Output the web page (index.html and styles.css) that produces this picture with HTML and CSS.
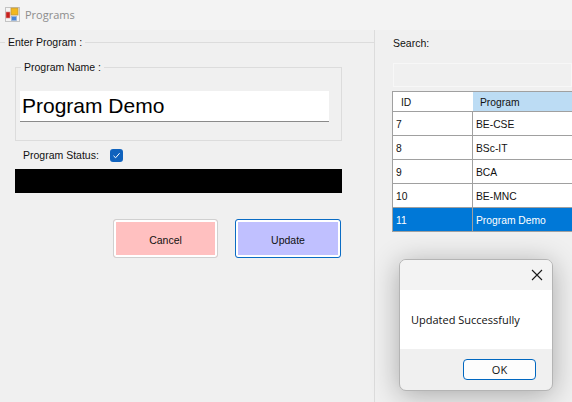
FILE: index.html
```html
<!DOCTYPE html>
<html lang="en">
<head>
  <meta charset="UTF-8" />
  <title>Programs</title>
  <link rel="stylesheet" href="styles.css">
</head>
<body>
  <div class="window">

    <!-- Title bar -->
    <div class="titlebar">
      <svg class="app-icon" width="16" height="16" viewBox="0 0 16 16">
        <rect x="1.5" y="0.5" width="14" height="14" fill="#f4f4f4" stroke="#c4c4c4"/>
        <rect x="2" y="5" width="4" height="6" fill="#c8201c" stroke="#d89090" stroke-width="0.6"/>
        <rect x="7" y="1" width="7" height="7" fill="#f2b81e" stroke="#c09a40" stroke-width="0.8"/>
        <rect x="7.5" y="9.5" width="5" height="4" fill="#4a86d8" stroke="#9ab4d8" stroke-width="0.8"/>
      </svg>
      <span class="title">Programs</span>
    </div>

    <div class="main">
      <!-- Left side: edit form -->
      <div class="left">
        <fieldset class="enter-group">
          <legend>Enter Program :</legend>
          <fieldset class="name-group">
            <legend>Program Name :</legend>
            <div class="name-input">Program Demo</div>
          </fieldset>
          <div class="status-row">
            <span>Program Status:</span>
            <span class="checkbox">
              <svg width="9" height="9" viewBox="0 0 9 9"><path d="M1.5 4.8 L3.6 6.8 L7.6 2.2" fill="none" stroke="#fff" stroke-width="1"/></svg>
            </span>
          </div>
          <div class="black-bar"></div>
          <div class="buttons">
            <div class="btn btn-cancel">Cancel</div>
            <div class="btn btn-update">Update</div>
          </div>
        </fieldset>
      </div>

      <!-- Right side: search and grid -->
      <div class="right">
        <div class="search-label">Search:</div>
        <div class="search-box"></div>
        <div class="grid">
          <div class="row head">
            <div class="cell id">ID</div>
            <div class="cell prog">Program</div>
          </div>
          <div class="row">
            <div class="cell id">7</div>
            <div class="cell prog">BE-CSE</div>
          </div>
          <div class="row">
            <div class="cell id">8</div>
            <div class="cell prog">BSc-IT</div>
          </div>
          <div class="row">
            <div class="cell id">9</div>
            <div class="cell prog">BCA</div>
          </div>
          <div class="row">
            <div class="cell id">10</div>
            <div class="cell prog">BE-MNC</div>
          </div>
          <div class="row selected">
            <div class="cell id">11</div>
            <div class="cell prog">Program Demo</div>
          </div>
        </div>
      </div>
    </div>

    <!-- Message box -->
    <div class="dialog">
      <div class="dialog-top">
        <svg width="12" height="12" viewBox="0 0 12 12"><path d="M1 1 L11 11 M11 1 L1 11" stroke="#1a1a1a" stroke-width="1.1" fill="none"/></svg>
      </div>
      <div class="dialog-body">Updated Successfully</div>
      <div class="dialog-foot">
        <div class="ok-btn">OK</div>
      </div>
    </div>

  </div>
</body>
</html>
```

FILE: styles.css
```css
html, body {
  margin: 0;
  padding: 0;
  background: #f0f0f0;
  color: #111;
  font-family: 'Liberation Sans', Arial, sans-serif;
  font-size: 10.5px;
}

.window {
  position: relative;
  width: 572px;
  height: 402px;
  overflow: hidden;
  display: flex;
  flex-direction: column;
}

.titlebar {
  height: 30px;
  flex: none;
  display: flex;
  align-items: center;
  gap: 5px;
  padding-left: 4px;
  background: #f3f3f3;
}

.title {
  color: #8c8c8c;
  font-family: 'Open Sans', sans-serif;
  font-size: 11px;
  padding-bottom: 2px;
}

.main {
  flex: 1;
  display: flex;
}

.left {
  width: 375px;
  flex: none;
  box-sizing: border-box;
  border-right: 1px solid #dcdcdc;
}

fieldset {
  margin: 0;
  min-width: 0;
  border: 1px solid #dcdcdc;
}

legend {
  padding: 0 3px;
  line-height: 14px;
}

.enter-group {
  border-width: 1px 0 0 0;
  padding: 0 0 0 15px;
  margin-top: 5px;
}

.enter-group > legend {
  margin-left: -10px;
}

.name-group {
  width: 327px;
  height: 81px;
  box-sizing: border-box;
  margin-top: 11px;
  padding: 17px 12px 0 4px;
}

.name-group > legend {
  margin-left: 1px;
}

.name-input {
  height: 30px;
  background: #fff;
  border-bottom: 1px solid #8a8a8a;
  font-size: 21px;
  line-height: 30px;
  padding-left: 2px;
  color: #000;
}

.status-row {
  display: flex;
  align-items: center;
  gap: 11px;
  height: 14px;
  margin-top: 7px;
  padding-left: 8px;
}

.checkbox {
  width: 13px;
  height: 13px;
  background: #0f62bd;
  border-radius: 3px;
  display: flex;
  align-items: center;
  justify-content: center;
}

.black-bar {
  width: 327px;
  height: 24px;
  background: #000;
  margin-top: 7px;
}

.buttons {
  display: flex;
  gap: 17px;
  margin: 26px 0 0 98px;
}

.btn {
  width: 105px;
  height: 39px;
  box-sizing: border-box;
  border-radius: 3px;
  display: flex;
  align-items: center;
  justify-content: center;
  padding-top: 2px;
}

.btn-cancel {
  background: #ffc0c0;
  border: 1px solid #d0d0d0;
  box-shadow: inset 0 0 0 2px #fff;
}

.btn-update {
  width: 106px;
  background: #c0c0ff;
  border: 1px solid #0a6cc4;
  box-shadow: inset 0 0 0 2px #fff;
}

.right {
  flex: 1;
  padding-left: 17px;
  min-width: 0;
}

.search-label {
  line-height: 14px;
  margin: 6px 0 0 1px;
}

.search-box {
  height: 24px;
  box-sizing: border-box;
  margin: 13px 0 4px 1px;
  background: #f0f0f0;
  border: 1px solid #f7f7f7;
}

.grid {
  border: 1px solid #a0a0a0;
  border-right: 0;
  font-size: 10.3px;
}

.row {
  display: flex;
  height: 24px;
  background: #fff;
  border-top: 1px solid #a0a0a0;
  box-sizing: border-box;
}

.row.head {
  height: 19px;
  border-top: 0;
}

.cell {
  display: flex;
  align-items: center;
  box-sizing: border-box;
  padding-top: 1px;
}

.cell.id {
  width: 80px;
  flex: none;
  padding-left: 3px;
  border-right: 1px solid #a0a0a0;
}

.cell.prog {
  flex: 1;
  padding-left: 3px;
}

.head .cell.id {
  padding-left: 8px;
  border-right: 0;
}

.head .cell.prog {
  background: #bcdcf4;
  padding-left: 7px;
}

.selected {
  background: #0078d7;
  color: #fff;
}

.dialog {
  position: absolute;
  left: 399px;
  top: 259px;
  width: 154px;
  height: 132px;
  box-sizing: border-box;
  background: #f0f0f0;
  border: 1px solid #b4b4b4;
  border-radius: 7px;
  box-shadow: 0 4px 28px rgba(0, 0, 0, 0.3);
  display: flex;
  flex-direction: column;
  overflow: hidden;
}

.dialog-top {
  height: 30px;
  flex: none;
  background: #f3f3f3;
  display: flex;
  align-items: center;
  justify-content: flex-end;
  padding-right: 9px;
}

.dialog-body {
  height: 59px;
  flex: none;
  background: #fff;
  display: flex;
  align-items: center;
  padding-left: 11px;
  font-family: 'Open Sans', sans-serif;
  font-size: 11px;
}

.dialog-foot {
  flex: 1;
  display: flex;
  justify-content: flex-end;
  padding: 10px 16px 0 0;
}

.ok-btn {
  width: 73px;
  height: 21px;
  box-sizing: border-box;
  background: #fdfdfd;
  border: 1px solid #0067c0;
  border-radius: 4px;
  text-align: center;
  line-height: 19px;
  font-family: 'Open Sans', sans-serif;
  font-size: 11px;
}
```
